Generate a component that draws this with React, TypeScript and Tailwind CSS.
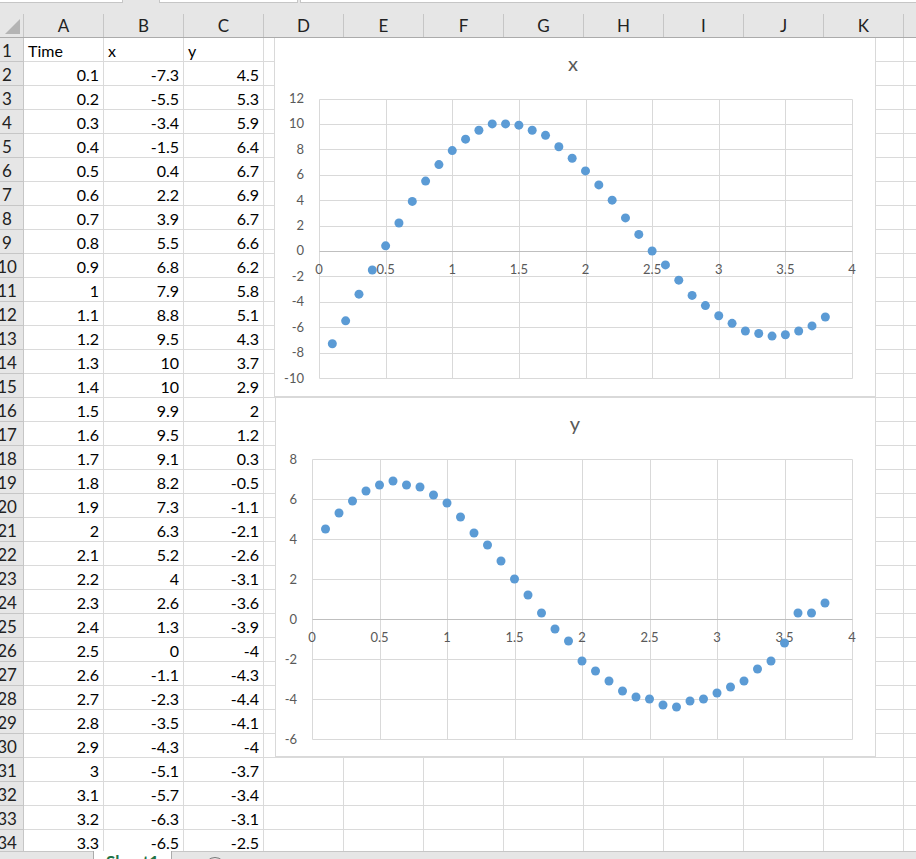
import { Fragment } from 'react'

const cols = ['A', 'B', 'C', 'D', 'E', 'F', 'G', 'H', 'I', 'J', 'K', 'L']
const xs = [-7.3, -5.5, -3.4, -1.5, 0.4, 2.2, 3.9, 5.5, 6.8, 7.9, 8.8, 9.5, 10, 10, 9.9, 9.5, 9.1, 8.2, 7.3, 6.3, 5.2, 4, 2.6, 1.3, 0, -1.1, -2.3, -3.5, -4.3, -5.1, -5.7, -6.3, -6.5, -6.7, -6.6, -6.3, -5.9, -5.2]
const ys = [4.5, 5.3, 5.9, 6.4, 6.7, 6.9, 6.7, 6.6, 6.2, 5.8, 5.1, 4.3, 3.7, 2.9, 2, 1.2, 0.3, -0.5, -1.1, -2.1, -2.6, -3.1, -3.6, -3.9, -4, -4.3, -4.4, -4.1, -4, -3.7, -3.4, -3.1, -2.5, -2.1, -1.2, 0.3, 0.3, 0.8]
const times = xs.map((_, i) => (i + 1) / 10)

type ChartProps = {
  title: string
  values: number[]
  yMin: number
  yMax: number
  left: number
  right: number
  top: number
  bottom: number
  titleX: number
  width: number
}

function Scatter({ title, values, yMin, yMax, left, right, top, bottom, titleX, width }: ChartProps) {
  const sx = (v: number) => left + (v / 4) * (right - left)
  const sy = (v: number) => bottom - ((v - yMin) / (yMax - yMin)) * (bottom - top)
  const px = (v: number) => Math.round(v) + 0.5
  const yTicks: number[] = []
  for (let v = yMin; v <= yMax; v += 2) yTicks.push(v)
  const xTicks = [0, 0.5, 1, 1.5, 2, 2.5, 3, 3.5, 4]

  return (
    <svg width={width} height={358} fontFamily="Lato, 'Open Sans', sans-serif">
      <text x={titleX} y={33} textAnchor="middle" fontSize={20} fill="#595959">{title}</text>
      {xTicks.map(v => (
        <line key={'v' + v} x1={px(sx(v))} x2={px(sx(v))} y1={px(top)} y2={px(bottom)} stroke="#d9d9d9" />
      ))}
      {yTicks.map(v => (
        <line key={'h' + v} x1={px(left)} x2={px(right)} y1={px(sy(v))} y2={px(sy(v))} stroke={v === 0 ? '#bfbfbf' : '#d9d9d9'} />
      ))}
      {yTicks.map(v => (
        <text key={'yl' + v} x={left - 15} y={sy(v) + 4.5} textAnchor="end" fontSize={13} fill="#595959">{v}</text>
      ))}
      {xTicks.map(v => (
        <text key={'xl' + v} x={sx(v)} y={sy(0) + 23} textAnchor="middle" fontSize={13} fill="#595959">{v}</text>
      ))}
      {values.map((v, i) => (
        <circle key={i} cx={sx(times[i])} cy={sy(v)} r={4.5} fill="#5b9bd5" />
      ))}
    </svg>
  )
}

export default function App() {
  const rows = Array.from({ length: 34 }, (_, i) => i + 1)

  return (
    <div className="w-[916px] h-[859px] overflow-hidden flex flex-col bg-white text-black font-['Lato','Open_Sans',sans-serif]">
      {/* strip under the formula bar */}
      <div className="h-[14px] shrink-0 bg-[#e6e6e6] flex items-start">
        <div className="w-[123px] h-[3px] bg-white border-b border-r border-[#c6c6c6]" />
        <div className="w-[36px]" />
        <div className="w-[139px] h-[3px] bg-white border-b border-x border-[#c6c6c6]" />
        <div className="w-[2px]" />
        <div className="flex-1 h-[3px] bg-white border-b border-l border-[#c6c6c6]" />
      </div>

      {/* column headers */}
      <div className="h-[24px] shrink-0 flex bg-[#e6e6e6] border-b border-[#ababab]">
        <div className="w-[24px] shrink-0 border-r border-[#c6c6c6] flex items-end justify-end p-[3px]">
          <svg width="15" height="15" viewBox="0 0 15 15"><polygon points="15,0 15,15 0,15" fill="#b4b4b4" /></svg>
        </div>
        {cols.map(c => (
          <div key={c} className="w-[80px] shrink-0 border-r border-[#c6c6c6] text-center text-[17px] leading-[23px] text-[#222]">{c}</div>
        ))}
      </div>

      {/* grid with charts on top */}
      <div className="relative h-[813px] shrink-0 overflow-hidden">
        {rows.map(r => {
          const i = r - 2
          const cells = r === 1 ? ['Time', 'x', 'y'] : [String(times[i]), String(xs[i]), String(ys[i])]
          return (
            <div key={r} className="flex h-[24px]">
              <div className="w-[24px] shrink-0 bg-[#e6e6e6] border-b border-r border-[#c6c6c6] flex items-end overflow-hidden">
                <div className="w-[14px] flex justify-center text-[17px] leading-5 text-[#222] whitespace-nowrap">{r}</div>
              </div>
              {cols.map((c, ci) => (
                <Fragment key={c}>
                  <div className={`w-[80px] shrink-0 border-b border-r border-[#dadada] px-[4px] flex items-end text-[16px] leading-5 whitespace-nowrap ${r === 1 ? 'justify-start' : 'justify-end'}`}>
                    {ci < 3 ? cells[ci] : ''}
                  </div>
                </Fragment>
              ))}
            </div>
          )
        })}

        <div className="absolute left-[274px] top-[-1px] w-[602px] h-[360px] bg-white border border-[#d9d9d9]">
          <Scatter title="x" values={xs} yMin={-10} yMax={12} left={44} right={577} top={60.5} bottom={340} titleX={298} width={600} />
        </div>
        <div className="absolute left-[275px] top-[359px] w-[601px] h-[360px] bg-white border border-[#d9d9d9]">
          <Scatter title="y" values={ys} yMin={-6} yMax={8} left={36} right={576} top={61} bottom={341} titleX={299} width={599} />
        </div>
      </div>

      {/* sheet tabs */}
      <div className="flex-1 flex bg-[#e6e6e6] overflow-hidden">
        <div className="w-[93px] border-t border-[#c6c6c6]" />
        <div className="w-[79px] bg-white border-x border-[#ababab] pl-[12px] pt-[1px] text-[17px] leading-5 font-bold text-[#217346]">Sheet1</div>
        <div className="flex-1 border-t border-[#c6c6c6] pl-[32px] pt-[5px]">
          <div className="w-[22px] h-[22px] rounded-full border border-[#777]" />
        </div>
      </div>
    </div>
  )
}
